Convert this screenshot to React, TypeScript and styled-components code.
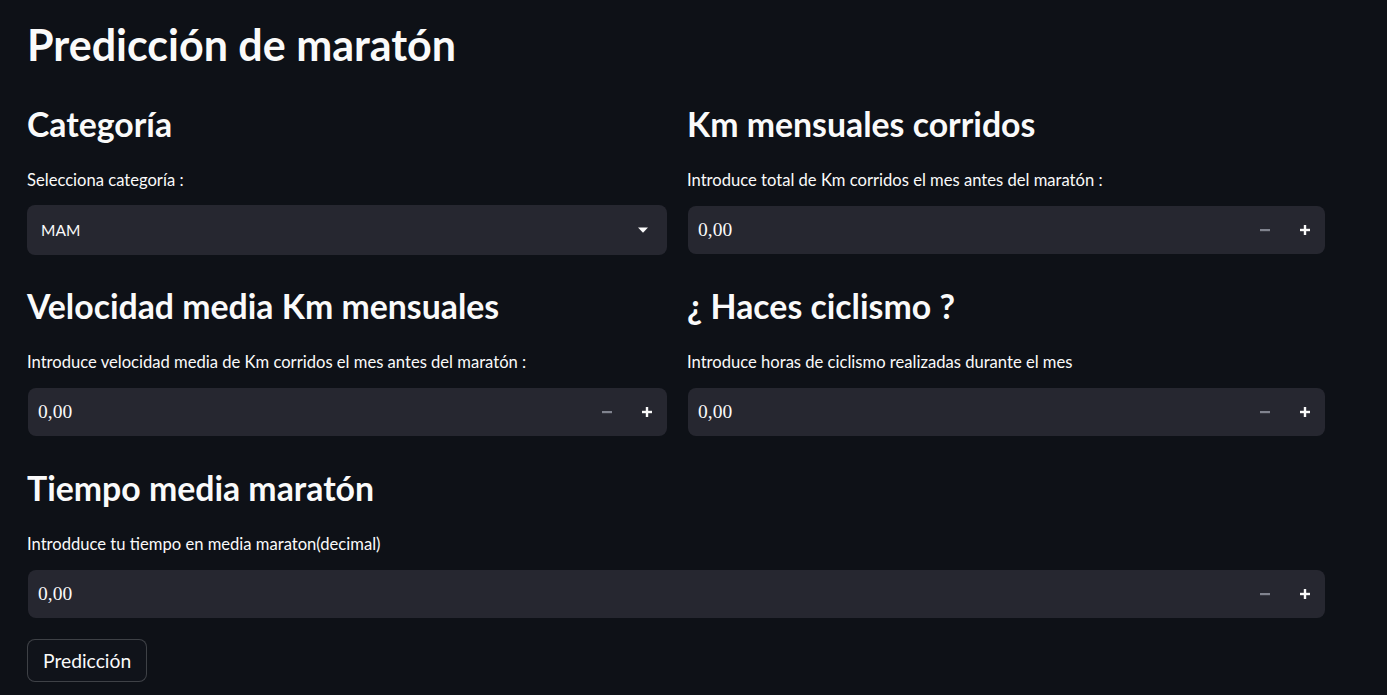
import React from "react";
import styled, { createGlobalStyle } from "styled-components";

const GlobalStyle = createGlobalStyle`
  html, body {
    margin: 0;
    padding: 0;
    background: #0e1117;
    color: #fafafa;
    font-family: "Lato", "Open Sans", sans-serif;
  }
  * { box-sizing: border-box; }
`;

const Page = styled.main`
  min-height: 695px;
  padding: 19px 0 0 27px;
  background: #0e1117;
`;

const Title = styled.h1`
  margin: 0 0 33px;
  font-size: 43px;
  line-height: 52px;
  font-weight: 700;
  color: #fafafa;
`;

const Grid = styled.div`
  display: grid;
  grid-template-columns: 640px 638px;
  column-gap: 20px;
  row-gap: 31px;
  width: 1298px;
`;

const Section = styled.section<{ $full?: boolean }>`
  display: flex;
  flex-direction: column;
  grid-column: ${(p) => (p.$full ? "1 / -1" : "auto")};
`;

const Heading = styled.h2`
  margin: 0 0 23.5px;
  font-size: 33.8px;
  line-height: 40px;
  font-weight: 700;
  color: #fafafa;
`;

const Label = styled.p`
  margin: 0 0 13.5px;
  font-size: 16.6px;
  line-height: 24px;
  font-weight: 400;
  color: #fafafa;
`;

const ControlSlot = styled.div`
  height: 50px;
  display: flex;
  align-items: center;
`;

const SelectBox = styled.div`
  width: 100%;
  height: 50px;
  display: flex;
  align-items: center;
  justify-content: space-between;
  padding: 0 19px 0 14px;
  background: #262730;
  border-radius: 8px;
  font-size: 15.5px;
  color: #fafafa;
  cursor: pointer;
`;

const NumberBox = styled.div`
  width: 100%;
  height: 48px;
  display: flex;
  align-items: center;
  background: #262730;
  border-radius: 8px;
  margin-left: 1px;
`;

const NumberValue = styled.input`
  flex: 1;
  min-width: 0;
  height: 100%;
  padding: 0 0 0 10px;
  border: none;
  outline: none;
  background: transparent;
  color: #fafafa;
  font-family: "Liberation Serif", "Times New Roman", serif;
  font-size: 19.5px;
`;

const StepButton = styled.button<{ $muted?: boolean }>`
  width: 40px;
  height: 100%;
  padding: 0;
  border: none;
  background: transparent;
  display: flex;
  align-items: center;
  justify-content: center;
  color: ${(p) => (p.$muted ? "#80838e" : "#fafafa")};
  cursor: pointer;
`;

const SubmitButton = styled.button`
  margin-top: 20px;
  height: 43px;
  padding: 0 15px;
  border: 1px solid rgba(250, 250, 250, 0.2);
  border-radius: 8px;
  background: #10131a;
  color: #fafafa;
  font-family: "Lato", "Open Sans", sans-serif;
  font-size: 19.3px;
  line-height: 1;
  cursor: pointer;
`;

const Minus = () => (
  <svg width="10" height="10" viewBox="0 0 10 10">
    <rect x="0" y="4" width="10" height="2.2" fill="currentColor" />
  </svg>
);

const Plus = () => (
  <svg width="10" height="10" viewBox="0 0 10 10">
    <rect x="0" y="3.8" width="10" height="2.4" fill="currentColor" />
    <rect x="3.8" y="0" width="2.4" height="10" fill="currentColor" />
  </svg>
);

const Caret = () => (
  <svg width="10" height="6" viewBox="0 0 10 6">
    <path d="M0 0.5 L10 0.5 L5 5.8 Z" fill="#fafafa" />
  </svg>
);

const NumberInput = () => (
  <ControlSlot>
    <NumberBox>
      <NumberValue readOnly value="0,00" />
      <StepButton $muted aria-label="menos">
        <Minus />
      </StepButton>
      <StepButton aria-label="más">
        <Plus />
      </StepButton>
    </NumberBox>
  </ControlSlot>
);

export default function App() {
  return (
    <>
      <GlobalStyle />
      <Page>
        <Title>Predicción de maratón</Title>
        <Grid>
          <Section>
            <Heading>Categoría</Heading>
            <Label>Selecciona categoría :</Label>
            <ControlSlot>
              <SelectBox>
                <span>MAM</span>
                <Caret />
              </SelectBox>
            </ControlSlot>
          </Section>
          <Section>
            <Heading>Km mensuales corridos</Heading>
            <Label>Introduce total de Km corridos el mes antes del maratón :</Label>
            <NumberInput />
          </Section>
          <Section>
            <Heading>Velocidad media Km mensuales</Heading>
            <Label>Introduce velocidad media de Km corridos el mes antes del maratón :</Label>
            <NumberInput />
          </Section>
          <Section>
            <Heading>¿ Haces ciclismo ?</Heading>
            <Label>Introduce horas de ciclismo realizadas durante el mes</Label>
            <NumberInput />
          </Section>
          <Section $full>
            <Heading>Tiempo media maratón</Heading>
            <Label>Introdduce tu tiempo en media maraton(decimal)</Label>
            <NumberInput />
          </Section>
        </Grid>
        <SubmitButton>Predicción</SubmitButton>
      </Page>
    </>
  );
}
